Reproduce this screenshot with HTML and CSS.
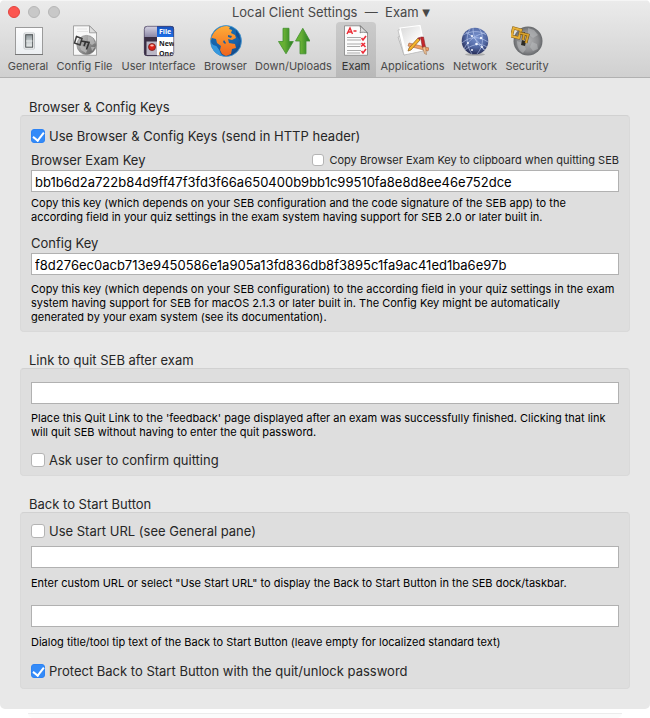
FILE: index.html
```html
<!DOCTYPE html>
<html lang="en">
<head>
<meta charset="utf-8">
<title>Local Client Settings — Exam</title>
<link rel="stylesheet" href="styles.css">
</head>
<body>
<div class="window">
  <header class="titlebar">
    <div class="title-row">
      <div class="lights">
        <button class="light close" aria-label="Close"></button>
        <button class="light" aria-label="Minimize"></button>
        <button class="light" aria-label="Zoom"></button>
      </div>
      <h1>Local Client Settings &nbsp;—&nbsp; Exam <span class="arrow">▼</span></h1>
    </div>
    <nav class="toolbar">
      <button class="tool">
        <svg viewBox="0 0 32 32">
          <defs><linearGradient id="plate" x2="0" y2="1"><stop stop-color="#fdfdfe"/><stop offset="1" stop-color="#eceff2"/></linearGradient>
          <linearGradient id="switch" x2="0" y2="1"><stop stop-color="#8d969a"/><stop offset=".5" stop-color="#c4cacc"/><stop offset="1" stop-color="#e9eded"/></linearGradient></defs>
          <rect x="3.500" y="2.500" width="27" height="27" fill="url(#plate)" stroke="#9b9b9b"/>
          <path d="M3 29.500h28" stroke="#777"/>
          <rect x="12" y="8" width="10.500" height="16" rx="1" fill="#fff" stroke="#c4c8cb"/>
          <rect x="13.700" y="9.700" width="7" height="12.500" fill="url(#switch)" stroke="#4b5053"/>
          <path d="M14 16h6.500" stroke="#f4f6f6" stroke-width=".8"/>
        </svg>
        <span>General</span>
      </button>
      <button class="tool">
        <svg viewBox="0 0 32 32">
          <defs><linearGradient id="ball" x2="1" y2="1"><stop stop-color="#c9c9c9"/><stop offset="1" stop-color="#5c5c5c"/></linearGradient></defs>
          <path d="M4.500.8h16l7 7v22.500h-23z" fill="#f8f8f8" stroke="#929292" stroke-width=".8"/>
          <path d="M8 4h10M8 6.500h11" stroke="#e4e4e4"/>
          <path d="M20.500.8v7h7z" fill="#ddd" stroke="#868686" stroke-width=".7"/>
          <circle cx="17.500" cy="20" r="9.600" fill="url(#ball)" stroke="#777" stroke-width=".6"/>
          <path d="M19 11l5 2 2 5-3 2-4-3zM10 19l5 3 4 1-2 5-5-3zM22 22l4 0-3 4z" fill="#b9b9b9" opacity=".8"/>
          <path d="M7.500 11.500l5.500 2-2 6.500-5.500-2z" fill="none" stroke="#3d3d3d" stroke-width="1.500"/>
          <path d="M12 16l8 1.500-2.500 7M16.500 17l-1.500 4" fill="none" stroke="#333" stroke-width="1.700"/>
        </svg>
        <span>Config File</span>
      </button>
      <button class="tool">
        <svg viewBox="0 0 32 32">
          <defs><clipPath id="menu-clip"><rect x="1" y="1" width="30" height="30" rx="3"/></clipPath>
          <linearGradient id="bar" x2="0" y2="1"><stop stop-color="#d6d4e4"/><stop offset="1" stop-color="#8c88a6"/></linearGradient>
          <linearGradient id="blue" x2="0" y2="1"><stop stop-color="#1751be"/><stop offset="1" stop-color="#1e6ee4"/></linearGradient></defs>
          <g clip-path="url(#menu-clip)">
            <path d="M1 1h30v30H1z" fill="#392e43"/>
            <path d="M1 1h13v11H1z" fill="url(#bar)"/>
            <path d="M14 1h17v11H14z" fill="url(#blue)"/>
            <path d="M14 12h17v19H14z" fill="#fff"/>
            <path d="M3.500 30V16.500h10.500v13.500z" fill="#bab7c6"/>
            <circle cx="9" cy="22" r="3.500" fill="#dc2118" stroke="#6f2020" stroke-width=".8"/>
            <ellipse cx="9" cy="20.500" rx="1.800" ry="1" fill="#ffc0b5"/>
            <text x="16" y="9.300" class="menu-text menu-light">File</text>
            <text x="16" y="21" class="menu-text">New</text>
            <text x="16" y="31" class="menu-text">One</text>
          </g>
          <rect x="1.300" y="1.300" width="29.400" height="29.400" rx="3" fill="none" stroke="#4c4260" stroke-width=".7"/>
        </svg>
        <span>User Interface</span>
      </button>
      <button class="tool">
        <svg viewBox="0 0 32 32">
          <defs><radialGradient id="ocean" cx=".4" cy=".2" r=".85"><stop stop-color="#1675b5"/><stop offset=".65" stop-color="#1760a8"/><stop offset="1" stop-color="#124483"/></radialGradient>
          <linearGradient id="land" x2="0" y2="1"><stop stop-color="#ffac38"/><stop offset="1" stop-color="#ee641d"/></linearGradient></defs>
          <circle cx="16" cy="16" r="15.500" fill="url(#ocean)" stroke="#4999d0" stroke-width=".8"/>
          <path d="M1 15C2 7 9 1 17 1l3 1-1 2 3 1-1 3 4 2 1 3-4 2-4-1 1 4 6 1 1 4-4 1-1 5-5 2-4-2-2-4 1-4-4-3-1-4-4-1-3 1z" fill="url(#land)"/>
          <path d="M18 10l4 1-1 2-3-1zM14 15l2 3-1 1-2-2z" fill="#1760a8"/>
          <path d="M1.300 18c0 7 6 13 12 13-3-2-3-4-4-6l-3-4-3-1z" fill="#3698dd"/>
          <path d="M26 5l3 4 1 6-2-2-2-3z" fill="#124e91"/>
        </svg>
        <span>Browser</span>
      </button>
      <button class="tool">
        <svg viewBox="0 0 32 32">
          <defs><linearGradient id="green" x2="1" y2="0"><stop stop-color="#66b62e"/><stop offset=".4" stop-color="#66ae34"/><stop offset="1" stop-color="#247b23"/></linearGradient></defs>
          <path d="M5 3.300h6v13.200h4.300L8 28.800.5 16.500H5z" fill="url(#green)" stroke="#439030" stroke-width=".8"/>
          <path d="M22 28.800h6V16h4L24.800 3.300 17.500 16H22z" fill="url(#green)" stroke="#439030" stroke-width=".8"/>
        </svg>
        <span>Down/Uploads</span>
      </button>
      <button class="tool selected">
        <svg viewBox="0 0 32 32">
          <path d="M4.500.8h16l7 7v22.500h-23z" fill="#fcfcfc" stroke="#8b8b8b" stroke-width=".9"/>
          <path d="M20 .8c1 3 .5 5 0 7 2-1 5-.5 7.500 0z" fill="#ddd" stroke="#666" stroke-width=".7"/>
          <path d="M7 9l3-6 2.500 6M8 7h4M13.500 6h3" fill="none" stroke="#ec2932" stroke-width="1.400"/>
          <path d="M7 12.500h14M7 15h14M7 19h14M7 21.500h13M7 25.500h14M7 28h13" stroke="#aaa" stroke-width="1.200"/>
          <path d="M21.500 13l1.500 2 3-4M21.500 18l4 4M25 18l-4 3.500M21.500 26l1.500 2 3-4" fill="none" stroke="#ec2c38" stroke-width="1.600"/>
        </svg>
        <span>Exam</span>
      </button>
      <button class="tool">
        <svg viewBox="0 0 32 32">
          <defs><linearGradient id="paper" x2="1" y2="1"><stop stop-color="#d8d8d8"/><stop offset=".6" stop-color="#fafafa"/></linearGradient></defs>
          <path d="M1 12l5-2 18 14-17 6z" fill="#f4f4f4" stroke="#aaa" stroke-width=".7"/>
          <path d="M1 5l21-3 4 24-19 4z" fill="#fff" stroke="#aaa" stroke-width=".6"/>
          <path d="M3 3l20-2.500 5 23.500-19 4z" fill="url(#paper)" stroke="#fff" stroke-width="1.200"/>
          <path d="M12 18l20 5-1 3-20-5z" fill="#f2a066" stroke="#a4633b" stroke-width=".6"/>
          <path d="M23.500 12l3 0 2 10-3 1z" fill="#c5272c" stroke="#7b1f22" stroke-width=".5"/>
          <path d="M25.500 22.500l3-1 1 8-2-1z" fill="#eec295" stroke="#8c6545" stroke-width=".5"/>
          <path d="M21 13l2 2-9 10-3 1 1-3z" fill="#f5b52b" stroke="#8b5a1e" stroke-width=".7"/>
          <path d="M20.500 13l2-1 1.500 2-1.500 1z" fill="#9e2f35"/>
        </svg>
        <span>Applications</span>
      </button>
      <button class="tool">
        <svg viewBox="0 0 32 32">
          <defs><radialGradient id="net" cx=".55" cy=".35" r=".65"><stop stop-color="#7792cf"/><stop offset=".6" stop-color="#5268a3"/><stop offset="1" stop-color="#272e58"/></radialGradient></defs>
          <ellipse cx="16" cy="29.500" rx="10" ry="1.300" fill="#aaa"/>
          <circle cx="16" cy="16" r="13.300" fill="url(#net)"/>
          <path d="M4 10c7-4 17-5 23 0M3 18c8-7 17-7 26-1M6 25c6-5 15-8 22-3M11 4c-5 8-3 18 2 25M20 3c5 7 5 18-2 26M7 7c7 5 15 11 18 18M26 8C18 9 9 15 5 24M14 3c0 9 4 17 12 22" fill="none" stroke="#bdcdf0" stroke-width=".6"/>
          <g fill="#f4f7ff"><circle cx="13" cy="11" r="1.100"/><circle cx="22" cy="13" r="1.200"/><circle cx="9" cy="18" r="1"/><circle cx="17.500" cy="19" r="1.300"/><circle cx="23" cy="22" r="1"/><circle cx="13" cy="25" r="1"/></g>
        </svg>
        <span>Network</span>
      </button>
      <button class="tool">
        <svg viewBox="0 0 32 32">
          <defs><radialGradient id="steel"><stop stop-color="#b1b2b4"/><stop offset=".7" stop-color="#8c8d90"/><stop offset="1" stop-color="#67696c"/></radialGradient></defs>
          <circle cx="17" cy="16" r="14.500" fill="url(#steel)"/>
          <path d="M17 3l6 2 4 5-5 3-5-4zM6 16l6 2 3 6-3 4c-4-2-6-6-6-12zM21 17l5 2 1 5-5 2-3-4z" fill="#babbbd" opacity=".55"/>
          <path d="M11 15l4 1.500-1 4.500-4-1zM12 8l2-1v2z" fill="#2c2a24"/>
          <path d="M2.500 3l7.500 2-2.200 8-7.300-2z" fill="none" stroke="#805b18" stroke-width="3"/>
          <path d="M2.500 3l7.500 2-2.200 8-7.300-2z" fill="none" stroke="#e7b038" stroke-width="2"/>
          <path d="M9 8l8 2-2 8M13 10l-1 5" fill="none" stroke="#765315" stroke-width="3"/>
          <path d="M9 8l8 2-2 8M13 10l-1 5" fill="none" stroke="#d9a32d" stroke-width="1.800"/>
        </svg>
        <span>Security</span>
      </button>
    </nav>
  </header>

  <main>
    <section>
      <h2>Browser &amp; Config Keys</h2>
      <div class="panel keys">
        <label class="check"><input type="checkbox" checked>Use Browser &amp; Config Keys (send in HTTP header)</label>
        <div class="field">
          <div class="field-head">
            <label for="exam-key">Browser Exam Key</label>
            <label class="check small"><input type="checkbox">Copy Browser Exam Key to clipboard when quitting SEB</label>
          </div>
          <input type="text" id="exam-key" value="bb1b6d2a722b84d9ff47f3fd3f66a650400b9bb1c99510fa8e8d8ee46e752dce" readonly>
          <p class="near">Copy this key (which depends on your SEB configuration and the code signature of the SEB app) to the<br>according field in your quiz settings in the exam system having support for SEB 2.0 or later built in.</p>
        </div>
        <div class="field">
          <div class="field-head"><label for="config-key">Config Key</label></div>
          <input type="text" id="config-key" value="f8d276ec0acb713e9450586e1a905a13fd836db8f3895c1fa9ac41ed1ba6e97b" readonly>
          <p>Copy this key (which depends on your SEB configuration) to the according field in your quiz settings in the exam<br>system having support for SEB for macOS 2.1.3 or later built in. The Config Key might be automatically<br>generated by your exam system (see its documentation).</p>
        </div>
      </div>
    </section>

    <section>
      <h2>Link to quit SEB after exam</h2>
      <div class="panel quit">
        <input type="text" aria-label="Quit link">
        <p>Place this Quit Link to the 'feedback' page displayed after an exam was successfully finished. Clicking that link<br>will quit SEB without having to enter the quit password.</p>
        <label class="check"><input type="checkbox">Ask user to confirm quitting</label>
      </div>
    </section>

    <section>
      <h2>Back to Start Button</h2>
      <div class="panel start">
        <label class="check"><input type="checkbox">Use Start URL (see General pane)</label>
        <input type="text" aria-label="Custom start URL">
        <p>Enter custom URL or select "Use Start URL" to display the Back to Start Button in the SEB dock/taskbar.</p>
        <input type="text" class="second" aria-label="Back to Start Button text">
        <p>Dialog title/tool tip text of the Back to Start Button (leave empty for localized standard text)</p>
        <label class="check"><input type="checkbox" checked>Protect Back to Start Button with the quit/unlock password</label>
      </div>
    </section>
  </main>
</div>
<div class="behind"></div>
</body>
</html>
```
FILE: styles.css
```css
* { box-sizing: border-box; }

body {
  margin: 0;
  background: #fff;
  color: #262626;
  font: 13px/16px Inter, "Liberation Sans", sans-serif;
}

h1, h2, p { margin: 0; font-weight: 400; }

.window {
  background: #e8e8e8;
  border-radius: 5px;
  padding-bottom: 20px;
  overflow: hidden;
}

.titlebar {
  background: linear-gradient(#ebebeb, #d0d0d0);
  border-top: 1px solid #f5f5f5;
  border-bottom: 1px solid #b1b1b1;
}

.title-row {
  display: grid;
  grid-template-columns: 1fr auto 1fr;
  align-items: center;
  height: 21px;
  padding: 0 8px;
}

.lights { display: flex; gap: 8px; }

.light {
  width: 12px;
  height: 12px;
  padding: 0;
  border: 1px solid #b6b6b6;
  border-radius: 50%;
  background: #c8c8c8;
}

.light.close { background: #fc5650; border-color: #e2443f; }

h1 {
  padding-left: 12px;
  font-size: 13px;
  line-height: 16px;
  color: #484848;
}

.arrow {
  font: 10px/10px "DejaVu Sans", sans-serif;
  vertical-align: 1px;
}

.toolbar {
  display: grid;
  grid-template-columns: 48px 65px 83px 51px 85px 40px 73px 52px 52px;
  padding-left: 4px;
}

.tool {
  display: flex;
  flex-direction: column;
  align-items: center;
  gap: 1px;
  padding: 3px 0;
  border: 0;
  background: none;
  color: #4a4a4a;
  font: 11px/16px Inter, "Liberation Sans", sans-serif;
  white-space: nowrap;
}

.tool.selected {
  background: linear-gradient(#cbcbcb, #b9b9b9);
  border-radius: 4px 4px 0 0;
  color: #333;
}

.tool svg { width: 32px; height: 32px; }

.menu-text { font: bold 7px "Open Sans", sans-serif; fill: #222; }
.menu-light { fill: #fff; }

main {
  display: flex;
  flex-direction: column;
  gap: 20px;
  padding: 21px 20px 0;
}

h2 {
  padding-left: 9px;
  font-size: 13px;
  line-height: 16px;
}

.panel {
  display: flex;
  flex-direction: column;
  padding: 0 10px;
  border: 1px solid #d9d9d9;
  border-top-color: #d1d1d1;
  border-radius: 4px;
  background: #dedede;
}

.keys { gap: 8px; padding-top: 12px; padding-bottom: 7px; }
.quit { padding-top: 13px; padding-bottom: 7px; }
.start { padding-top: 10px; padding-bottom: 9px; }

.field { display: flex; flex-direction: column; }
.field + .field { margin-top: 3px; }

.field-head {
  display: flex;
  justify-content: space-between;
  margin-bottom: 2px;
}

.check {
  display: flex;
  align-items: center;
  gap: 4px;
}

.check.small { gap: 5px; font-size: 11px; }

input[type="checkbox"] {
  appearance: none;
  flex: none;
  width: 14px;
  height: 14px;
  margin: 0;
  border: 1px solid #b4b4b4;
  border-radius: 3px;
  background: #fff;
}

.small input[type="checkbox"] { width: 12px; height: 12px; }

input[type="checkbox"]:checked {
  display: grid;
  place-items: center;
  border-color: #2d83f4;
  background: #348bf8;
}

input[type="checkbox"]:checked::after {
  content: "";
  width: 5px;
  height: 9px;
  margin-bottom: 2px;
  border: solid #fff;
  border-width: 0 2px 2px 0;
  transform: rotate(38deg);
}

input[type="text"] {
  width: 100%;
  height: 22px;
  padding: 2px 3px 0;
  border: 1px solid #b1b1b1;
  border-radius: 0;
  background: #fff;
  color: #000;
  font: 13px/16px Inter, "Liberation Sans", sans-serif;
}

p {
  margin-top: 7px;
  color: #000;
  font-size: 11px;
  line-height: 14px;
  white-space: nowrap;
}

.near { margin-top: 4px; }
.quit .check { margin-top: 13px; }
.start input[type="text"] { margin-top: 7px; }
.start p { margin-top: 8px; }
.start input[type="text"].second { margin-top: 15px; }
.start p + .check { margin-top: 14px; }

.behind {
  height: 5px;
  margin: 4px 28px 0;
  border-top: 1px solid #ececec;
  border-radius: 0 0 12px 12px;
  background: #fbfbfb;
}
```
